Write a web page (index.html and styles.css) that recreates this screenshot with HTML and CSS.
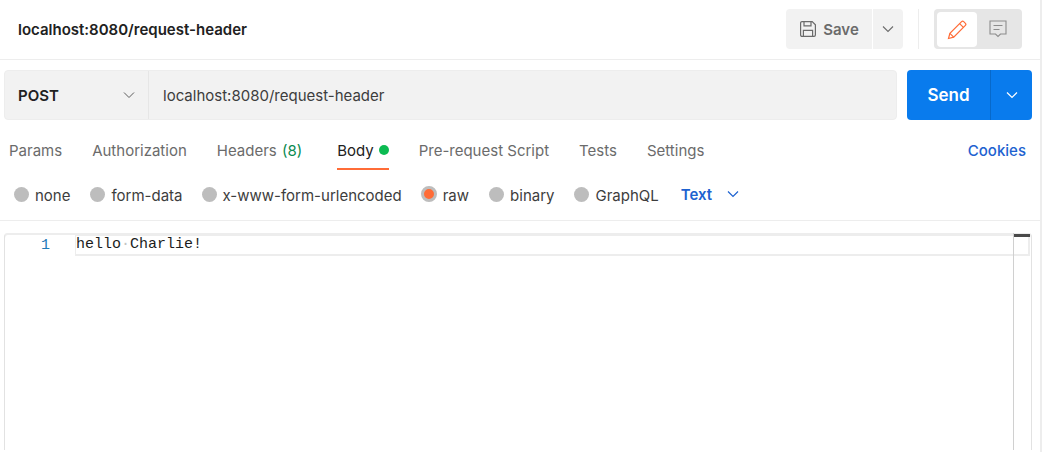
FILE: index.html
```html
<!DOCTYPE html>
<html lang="en">
<head>
<meta charset="utf-8">
<title>localhost:8080/request-header</title>
<link rel="stylesheet" href="styles.css">
</head>
<body>
<div class="app">
  <header class="topbar">
    <h1 class="title">localhost:8080/request-header</h1>
    <div class="top-actions">
      <button class="save-btn">
        <svg class="icon-save" viewBox="0 0 18 18" width="18" height="18" fill="none" stroke="#6b6b6b" stroke-width="1.2"><path d="M1.6 3a1.4 1.4 0 0 1 1.4-1.4h10.2l3.2 3.2V15a1.4 1.4 0 0 1-1.4 1.4H3A1.4 1.4 0 0 1 1.6 15z"/><path d="M5 1.8v4h7v-4"/><path d="M4.4 16.3v-6h9.2v6"/></svg>
        <span>Save</span>
      </button>
      <button class="save-more">
        <svg viewBox="0 0 12 8" width="12" height="8" fill="none" stroke="#6b6b6b" stroke-width="1.1"><path d="M1 1.5l5 5 5-5"/></svg>
      </button>
      <span class="vdiv"></span>
      <div class="toggle">
        <span class="toggle-on">
          <svg viewBox="0 0 20 20" width="20" height="20" fill="none" stroke="#ff6c37" stroke-width="1.2"><path d="M1.5 18.5l1.4-5.2L14.6 1.6a1.5 1.5 0 0 1 2.1 0l1.7 1.7a1.5 1.5 0 0 1 0 2.1L6.7 17.1z"/><path d="M12.6 3.6l3.8 3.8"/><path d="M2.9 13.3l3.8 3.8"/></svg>
        </span>
        <span class="toggle-off">
          <svg viewBox="0 0 18 18" width="18" height="18" fill="none" stroke="#8c8c8c" stroke-width="1.1"><path d="M1 1h16v13h-5.500l-2.500 2.500L6.500 14H1z"/><path d="M4.500 5.500h9M4.500 9.500h6"/></svg>
        </span>
      </div>
    </div>
  </header>

  <section class="urlrow">
    <div class="urlbar">
      <div class="method">
        <span>POST</span>
        <svg viewBox="0 0 12 8" width="12" height="8" fill="none" stroke="#5c5c5c" stroke-width="1"><path d="M1 1.500l5 5 5-5"/></svg>
      </div>
      <div class="url">localhost:8080/request-header</div>
    </div>
    <div class="send">
      <span class="send-main">Send</span>
      <span class="send-more">
        <svg viewBox="0 0 12 8" width="12" height="8" fill="none" stroke="#fff" stroke-width="1.200"><path d="M1 1.500l5 5 5-5"/></svg>
      </span>
    </div>
  </section>

  <nav class="tabs">
    <span class="tab">Params</span>
    <span class="tab">Authorization</span>
    <span class="tab tab-count">Headers&nbsp;<em class="count">(8)</em></span>
    <span class="tab active">Body<i class="dot"></i></span>
    <span class="tab">Pre-request Script</span>
    <span class="tab">Tests</span>
    <span class="tab">Settings</span>
    <span class="cookies">Cookies</span>
  </nav>

  <div class="bodytypes">
    <label class="radio"><i class="circle"></i>none</label>
    <label class="radio"><i class="circle"></i>form-data</label>
    <label class="radio radio-long"><i class="circle"></i>x-www-form-urlencoded</label>
    <label class="radio"><i class="circle checked"></i>raw</label>
    <label class="radio"><i class="circle"></i>binary</label>
    <label class="radio"><i class="circle"></i>GraphQL</label>
    <span class="format">Text
      <svg viewBox="0 0 12 8" width="12" height="8" fill="none" stroke="#1d62d0" stroke-width="1.200"><path d="M1 1.500l5 5 5-5"/></svg>
    </span>
  </div>

  <div class="editor">
    <div class="gutter">1</div>
    <div class="line">hello<span class="ws">·</span>Charlie!</div>
    <div class="ruler"><span class="thumb"></span></div>
  </div>
</div>
</body>
</html>
```

FILE: styles.css
```css
* { box-sizing: border-box; }
html, body { margin: 0; height: 100%; background: #fff; overflow: hidden; }
body { font-family: Inter, "Liberation Sans", sans-serif; font-size: 15px; color: #212121; }
button { font: inherit; border: 0; padding: 0; }

.app { width: 1042px; height: 452px; border-right: 2px solid #ededed; display: flex; flex-direction: column; }

.topbar { height: 60px; flex: none; display: flex; align-items: center; justify-content: space-between; padding: 0 18px 1px; border-bottom: 1px solid #ededed; }
.title { margin: 0; font-size: 15px; font-weight: 600; color: #212121; }
.top-actions { display: flex; align-items: center; height: 40px; }
.save-btn { width: 86px; height: 40px; background: #f2f2f2; border-radius: 4px 0 0 4px; display: flex; align-items: center; justify-content: center; gap: 6px; color: #6b6b6b; font-weight: 600; }
.save-more { width: 30px; height: 40px; margin-left: 1px; background: #f2f2f2; border-radius: 0 4px 4px 0; display: flex; align-items: center; justify-content: center; }
.vdiv { width: 1px; height: 40px; background: #ededed; margin: 0 15px; }
.toggle { width: 88px; height: 40px; background: #e6e6e6; border-radius: 4px; padding: 3px; display: flex; }
.toggle-on { width: 40px; height: 35px; background: #fff; border-radius: 4px; display: flex; align-items: center; justify-content: center; }
.toggle-off { flex: 1; display: flex; align-items: center; justify-content: center; padding-bottom: 1px; margin-left: -1px; }

.urlrow { display: flex; padding: 10px 0 0 4px; gap: 10px; flex: none; }
.urlbar { width: 893px; flex: none; height: 50px; display: flex; background: #f2f2f2; border: 1px solid #ededed; border-radius: 4px; }
.method { width: 144px; flex: none; display: flex; align-items: center; justify-content: space-between; padding: 0 13px; border-right: 1px solid #e6e6e6; font-weight: 600; color: #212121; }
.url { display: flex; align-items: center; padding-left: 14px; color: #3d3d3d; }
.send { width: 125px; flex: none; height: 50px; display: flex; background: #097bed; border-radius: 4px; color: #fff; font-weight: 600; font-size: 17px; }
.send-main { width: 84px; display: flex; align-items: center; justify-content: center; border-right: 1px solid #0769ca; }
.send-more { flex: 1; display: flex; align-items: center; justify-content: center; }

.tabs { height: 50px; flex: none; display: flex; align-items: stretch; gap: 30px; padding: 10px 14px 0 9px; color: #6b6b6b; }
.tab { display: flex; align-items: center; white-space: pre; }
.tab-count { padding-right: 5px; }
.tab.active { color: #212121; border-bottom: 2px solid #ff6c37; border-top: 2px solid transparent; gap: 5px; }
.count { font-style: normal; color: #0a8a4f; margin-left: 1px; }
.dot { width: 10px; height: 10px; border-radius: 50%; background: #0cbb52; }
.cookies { margin-left: auto; display: flex; align-items: center; color: #1d62d0; font-weight: 500; }

.bodytypes { height: 51px; flex: none; display: flex; align-items: center; gap: 20px; padding-left: 14px; border-bottom: 1px solid #ededed; color: #3d3d3d; }
.radio { display: flex; align-items: center; gap: 6px; }
.radio-long { margin-left: -1px; margin-right: -1px; }
.circle { width: 15px; height: 15px; border-radius: 50%; background: #bdbdbd; margin-bottom: 2px; }
.circle.checked { width: 16px; height: 16px; background: #ff6c37; border: 3px solid #bdbdbd; }
.format { display: flex; align-items: center; gap: 15px; margin-left: 2px; color: #1d62d0; font-weight: 600; margin-bottom: 2px; }

.editor { position: relative; margin: 12px 0 2px 4px; width: 1028px; flex: 1; display: grid; grid-template-columns: 70px 1fr; align-content: start; border: solid #e2e2e2; border-width: 0 1px 0 1px; border-radius: 4px 4px 0 0; box-shadow: inset 0 2px 0 #ededed; }
.gutter { padding: 5px 25px 0 0; text-align: right; color: #1f7ab8; font-family: "Liberation Mono", monospace; font-size: 15px; line-height: 16px; }
.line { margin: 2px 1px 0 0; height: 21px; border: solid #ededed; border-width: 1px 2px 2px 1px; font-family: "Liberation Mono", monospace; font-size: 15px; line-height: 18px; color: #1c1c1c; white-space: pre; }
.ws { color: #c4c4c4; }
.ruler { position: absolute; top: 0; bottom: 0; left: 1008px; width: 17px; border-left: 1px solid #d0d0d0; }
.thumb { display: block; height: 3px; margin-top: 1px; background: #4a4a4a; }
```
